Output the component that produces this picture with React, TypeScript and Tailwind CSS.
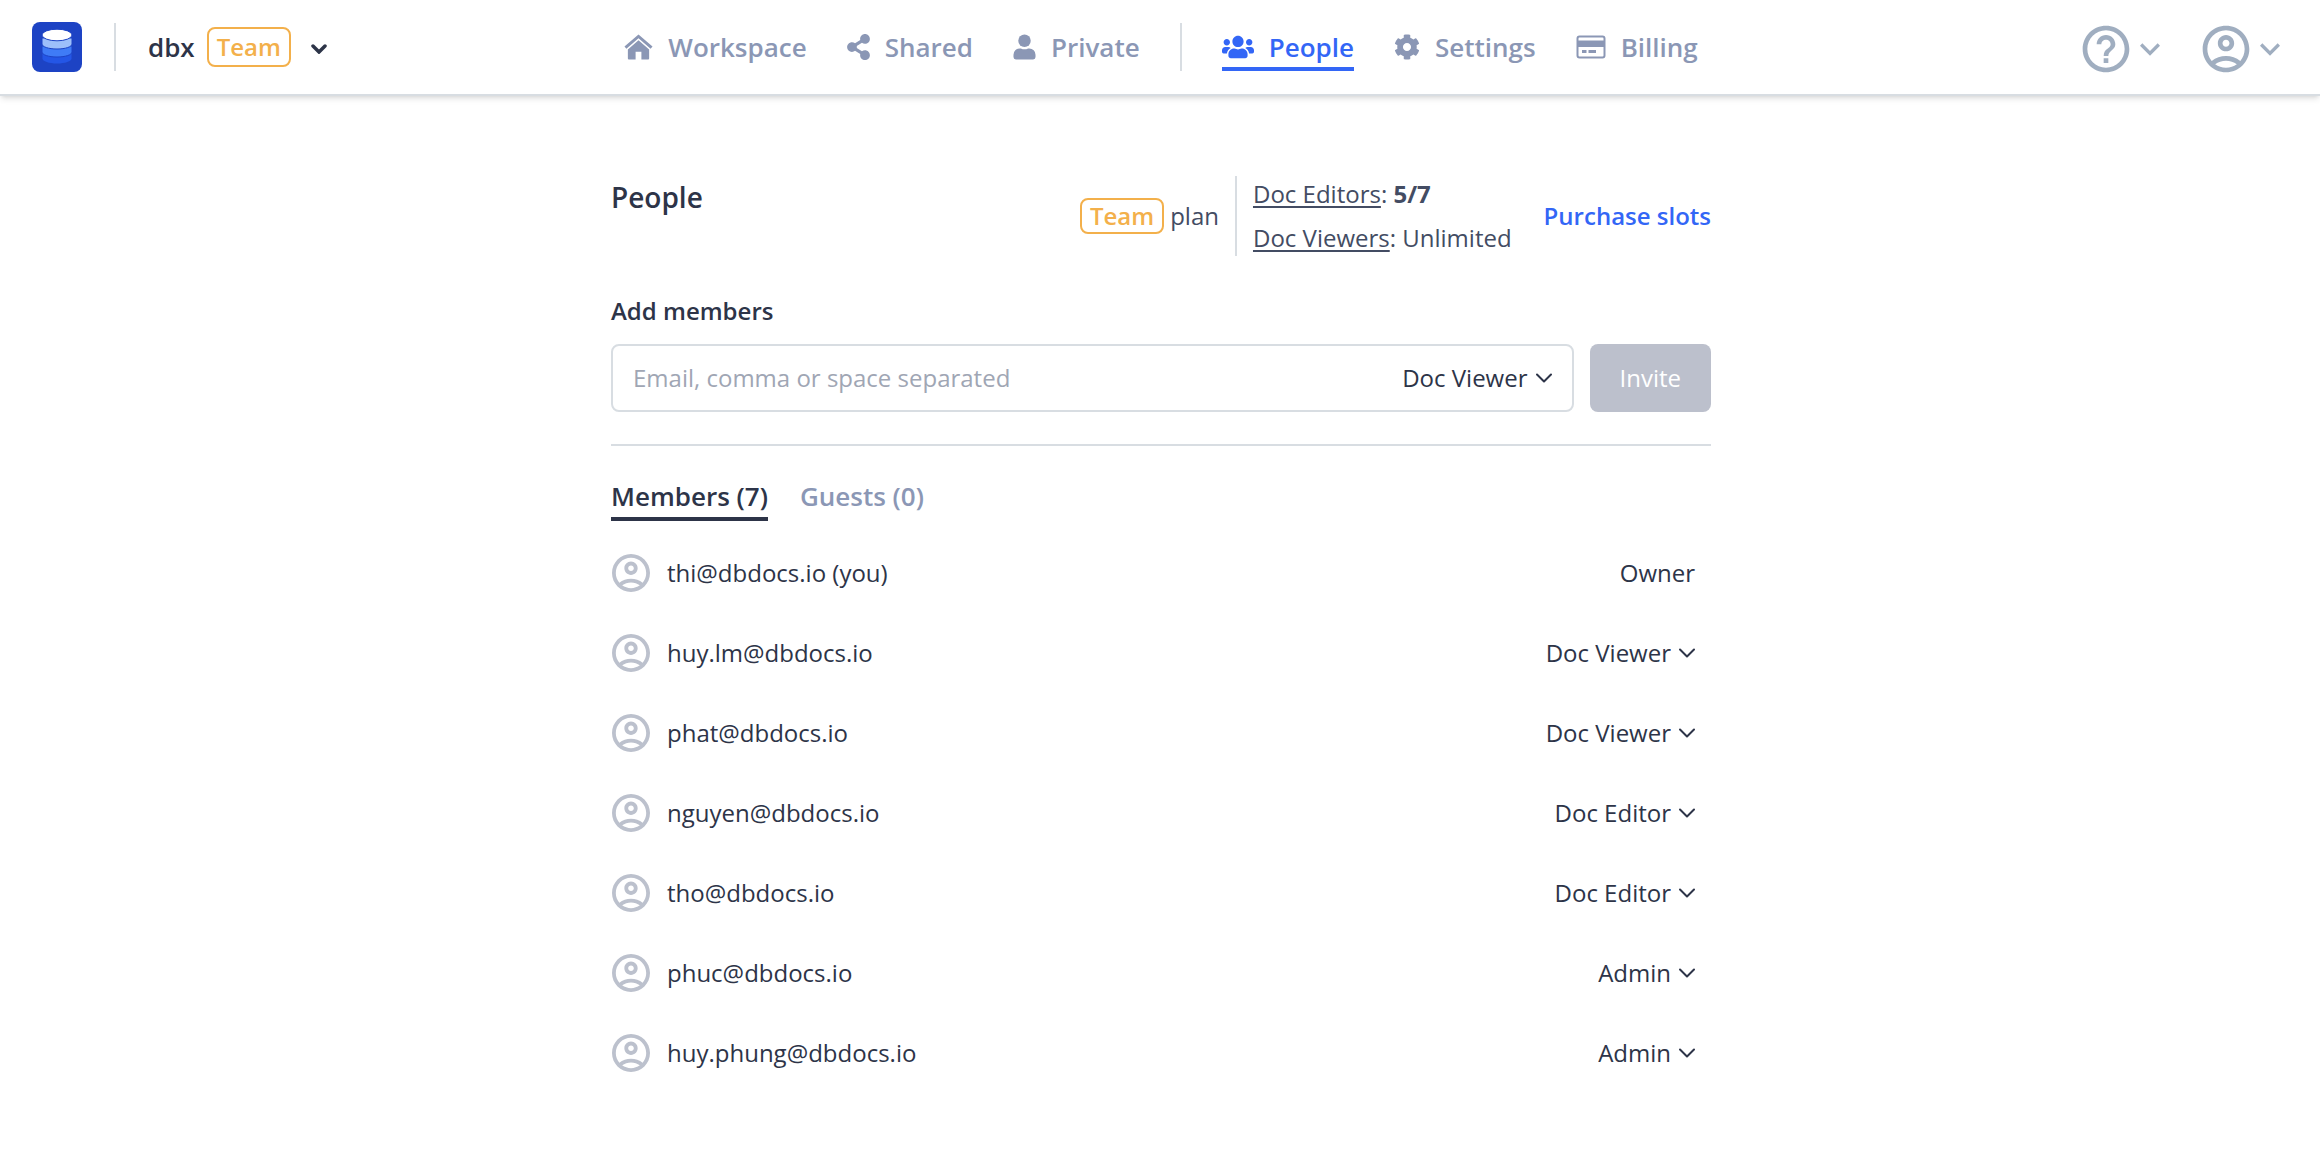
import React from "react";
import { MdExpandMore, MdHelpOutline, MdOutlineAccountCircle } from "react-icons/md";
import { FaShareAlt } from "react-icons/fa";

const members = [
  { email: "thi@dbdocs.io (you)", role: "Owner" },
  { email: "huy.lm@dbdocs.io", role: "Doc Viewer" },
  { email: "phat@dbdocs.io", role: "Doc Viewer" },
  { email: "nguyen@dbdocs.io", role: "Doc Editor" },
  { email: "tho@dbdocs.io", role: "Doc Editor" },
  { email: "phuc@dbdocs.io", role: "Admin" },
  { email: "huy.phung@dbdocs.io", role: "Admin" },
];

const roles = ["Doc Viewer", "Doc Editor", "Admin"];

function Logo() {
  return (
    <svg viewBox="0 0 50 50" className="size-[50px]" aria-hidden="true">
      <rect width="50" height="50" rx="8" fill="#1d43c4" />
      <path d="M10.5 31v5.500c0 2.800 6.500 5 14.500 5s14.500-2.200 14.500-5V31z" fill="#2456e6" />
      <path d="M10 24v6c0 2.800 6.500 5 15 5s15-2.200 15-5v-6z" fill="#3f7bf6" stroke="#1d43c4" />
      <path d="M10 16v6c0 2.800 6.500 5 15 5s15-2.200 15-5v-6z" fill="#9dbffa" stroke="#1d43c4" />
      <ellipse cx="25" cy="13" rx="15" ry="5.800" fill="#fff" stroke="#1d43c4" />
    </svg>
  );
}

function HomeIcon() {
  return (
    <svg viewBox="0 0 30 26" className="w-[29px] h-[26px]" fill="currentColor">
      <path d="M15 0 0.500 12.600l2 2.100L15 3.900l12.500 10.800 2-2.100z" />
      <path d="M15 6 4 15.600V25a1 1 0 0 0 1 1h7v-8h6v8h7a1 1 0 0 0 1-1v-9.400z" />
    </svg>
  );
}

function UserIcon() {
  return (
    <svg viewBox="0 0 24 26" className="w-[23px] h-[26px]" fill="currentColor">
      <circle cx="12" cy="6.500" r="6.500" />
      <path d="M7 14.500h1.200a9 9 0 0 0 7.600 0H17a6.500 6.500 0 0 1 6.500 6.500v2.500A2.500 2.500 0 0 1 21 26H3a2.500 2.500 0 0 1-2.500-2.500V21A6.500 6.500 0 0 1 7 14.500z" />
    </svg>
  );
}

function PeopleIcon() {
  return (
    <svg viewBox="0 0 640 512" className="w-[32px] h-[26px]" fill="currentColor">
      <path d="M96 224c35.300 0 64-28.700 64-64s-28.700-64-64-64-64 28.700-64 64 28.700 64 64 64zm448 0c35.300 0 64-28.700 64-64s-28.700-64-64-64-64 28.700-64 64 28.700 64 64 64zm32 32h-64c-17.600 0-33.500 7.100-45.100 18.600 40.300 22.100 68.900 62 75.100 109.400h66c17.700 0 32-14.300 32-32v-32c0-35.300-28.700-64-64-64zm-256 0c61.900 0 112-50.100 112-112S381.900 32 320 32 208 82.100 208 144s50.100 112 112 112zm76.800 32h-8.300c-20.800 10-43.900 16-68.500 16s-47.600-6-68.500-16h-8.300C179.600 288 128 339.600 128 403.200V432c0 26.500 21.500 48 48 48h288c26.500 0 48-21.500 48-48v-28.800c0-63.600-51.600-115.200-115.200-115.200zm-223.700-13.400C161.500 263.100 145.600 256 128 256H64c-35.300 0-64 28.700-64 64v32c0 17.700 14.300 32 32 32h65.900c6.300-47.400 34.900-87.300 75.200-109.400z" />
    </svg>
  );
}

function GearIcon() {
  return (
    <svg viewBox="0 0 512 512" className="size-[26px]" fill="currentColor">
      <path d="M487.400 315.700l-42.600-24.600c4.300-23.200 4.300-47 0-70.200l42.600-24.600c4.900-2.800 7.100-8.600 5.500-14-11.100-35.600-30-67.800-54.700-94.600-3.800-4.100-10-5.100-14.800-2.300L380.800 110c-17.900-15.400-38.500-27.300-60.800-35.100V25.800c0-5.600-3.900-10.500-9.400-11.700-36.700-8.200-74.300-7.800-109.200 0-5.500 1.200-9.400 6.100-9.400 11.700V75c-22.200 7.900-42.800 19.800-60.800 35.100L88.700 85.500c-4.900-2.800-11-1.900-14.800 2.300-24.700 26.700-43.600 58.900-54.700 94.600-1.700 5.400.6 11.200 5.500 14L67.300 221c-4.300 23.200-4.300 47 0 70.200l-42.600 24.600c-4.900 2.800-7.100 8.600-5.500 14 11.100 35.600 30 67.800 54.700 94.600 3.800 4.100 10 5.100 14.800 2.300l42.600-24.600c17.900 15.400 38.500 27.300 60.800 35.100v49.200c0 5.600 3.900 10.500 9.400 11.700 36.700 8.200 74.300 7.800 109.200 0 5.500-1.200 9.400-6.100 9.400-11.700v-49.200c22.200-7.900 42.800-19.800 60.800-35.100l42.600 24.600c4.900 2.800 11 1.900 14.800-2.300 24.700-26.700 43.600-58.900 54.700-94.600 1.500-5.500-.7-11.300-5.600-14.100zM256 336c-44.100 0-80-35.900-80-80s35.900-80 80-80 80 35.900 80 80-35.900 80-80 80z" />
    </svg>
  );
}

function CardIcon() {
  return (
    <svg viewBox="0 0 30 26" className="w-[30px] h-[26px]" fill="none">
      <rect x="1.500" y="2.500" width="27" height="21" rx="2" stroke="currentColor" strokeWidth="2" />
      <path d="M1 6.500h28V13H1z" fill="currentColor" />
      <path d="M6 17.500h4.500M12.500 17.500h7.500" stroke="currentColor" strokeWidth="3" />
    </svg>
  );
}

function SmallChevron({ className = "" }: { className?: string }) {
  return (
    <svg viewBox="0 0 16 10" className={`w-4 h-[10px] ${className}`} fill="none" aria-hidden="true">
      <path d="M1 1.500l7 7 7-7" stroke="currentColor" strokeWidth="2" strokeLinecap="round" strokeLinejoin="round" />
    </svg>
  );
}

function Avatar() {
  return (
    <svg viewBox="2 2 20 20" className="size-10 p-px text-[#bcc1cd] shrink-0" fill="currentColor" aria-hidden="true">
      <path d="M12 2C6.480 2 2 6.480 2 12s4.480 10 10 10 10-4.480 10-10S17.520 2 12 2zM7.350 18.500C8.660 17.560 10.260 17 12 17s3.340.56 4.650 1.500C15.340 19.440 13.740 20 12 20s-3.340-.56-4.650-1.500zm10.790-1.380C16.450 15.800 14.320 15 12 15s-4.450.8-6.140 2.120C4.700 15.730 4 13.950 4 12c0-4.420 3.580-8 8-8s8 3.580 8 8c0 1.950-.7 3.730-1.860 5.120zM12 6c-1.930 0-3.500 1.570-3.500 3.500S10.070 13 12 13s3.500-1.570 3.500-3.500S13.930 6 12 6zm0 5c-.83 0-1.500-.67-1.500-1.500S11.170 8 12 8s1.500.67 1.500 1.500S12.830 11 12 11z" />
    </svg>
  );
}

function TeamBadge({ className = "" }: { className?: string }) {
  return (
    <span
      className={`flex items-center rounded-lg border-2 border-[#f3b04b] px-2 text-2xl font-semibold text-[#f3b04b] ${className}`}
    >
      Team
    </span>
  );
}

function NavItem({ icon, label, active = false }: { icon: React.ReactNode; label: string; active?: boolean }) {
  return (
    <a
      href="#"
      className={`flex h-12 items-center gap-[15px] border-y-4 border-t-transparent ${
        active ? "border-b-[#3366f6] text-[#3366f6]" : "border-b-transparent text-[#8b97b5]"
      }`}
    >
      {icon}
      {label}
    </a>
  );
}

function RoleSelect({ value, label }: { value: string; label: string }) {
  return (
    <div className="relative flex items-center">
      <select
        aria-label={label}
        defaultValue={value}
        className="field-sizing-content appearance-none bg-transparent pr-6 outline-none"
      >
        {roles.map((r) => (
          <option key={r}>{r}</option>
        ))}
      </select>
      <SmallChevron className="pointer-events-none absolute right-0" />
    </div>
  );
}

export default function App() {
  return (
    <div className="min-h-screen bg-white font-['Open_Sans',sans-serif] text-2xl text-[#2d3448]">
      <header className="grid h-24 grid-cols-[1fr_auto_1fr] items-center border-b-2 border-[#d8dde2] pr-[30px] pl-8 text-[26px] font-semibold shadow-md">
        <div className="flex items-center">
          <Logo />
          <div className="mx-8 h-12 w-0.5 bg-[#d8dde2]" />
          <button className="flex items-center">
            dbx
            <TeamBadge className="ml-3 h-10" />
            <svg viewBox="0 0 16 10" className="ml-5 mt-1 w-4 h-[10px]" fill="none">
              <path d="M2 2l6 6 6-6" stroke="currentColor" strokeWidth="3.500" strokeLinecap="round" />
            </svg>
          </button>
        </div>

        <nav className="flex items-center gap-10">
          <NavItem icon={<HomeIcon />} label="Workspace" />
          <NavItem icon={<FaShareAlt className="w-[23px] h-[26px]" />} label="Shared" />
          <NavItem icon={<UserIcon />} label="Private" />
          <div className="h-12 w-0.5 bg-[#d8dde2]" />
          <NavItem icon={<PeopleIcon />} label="People" active />
          <NavItem icon={<GearIcon />} label="Settings" />
          <NavItem icon={<CardIcon />} label="Billing" />
        </nav>

        <div className="mt-1 flex items-center justify-end gap-7 text-[#a0aec0]">
          <button aria-label="Help" className="flex items-center">
            <MdHelpOutline className="size-14" />
            <MdExpandMore className="-ml-1 size-10" />
          </button>
          <button aria-label="Account" className="flex items-center">
            <MdOutlineAccountCircle className="size-14" />
            <MdExpandMore className="-ml-1 size-10" />
          </button>
        </div>
      </header>

      <main className="mx-auto max-w-[1102px] pt-20 pl-0.5">
        <div className="flex items-start justify-between">
          <h1 className="text-[28px] leading-[42px] font-semibold">People</h1>
          <div className="flex items-center text-[#434c63]">
            <TeamBadge className="h-9" />
            <span className="ml-1.5">plan</span>
            <div className="ml-4 h-20 border-l-2 border-[#d8dde2] pl-4">
              <div className="-mt-1 leading-[44px]">
                <span className="underline decoration-2 underline-offset-[3px]">Doc Editors</span>: <b>5/7</b>
              </div>
              <div className="leading-[44px]">
                <span className="underline decoration-2 underline-offset-[3px]">Doc Viewers</span>: Unlimited
              </div>
            </div>
            <a href="#" className="ml-8 font-semibold text-[#3366f6]">
              Purchase slots
            </a>
          </div>
        </div>

        <form className="mt-[37px] border-b-2 border-[#d8dde2] pb-8">
          <label htmlFor="emails" className="block leading-9 font-semibold">
            Add members
          </label>
          <div className="mt-[15px] flex gap-4">
            <div className="flex h-[68px] flex-1 items-center rounded-lg border-2 border-[#d8dde2] px-5">
              <input
                id="emails"
                type="text"
                placeholder="Email, comma or space separated"
                className="min-w-0 flex-1 outline-none placeholder:text-[#a0a6b4]"
              />
              <RoleSelect value="Doc Viewer" label="Role for new members" />
            </div>
            <button type="button" className="h-[68px] rounded-lg bg-[#bcc0cc] px-[30px] text-white">
              Invite
            </button>
          </div>
        </form>

        <div className="mt-8 flex gap-8 text-[26px] leading-9 font-semibold">
          <button className="border-b-4 border-[#2d3448] pb-[3px]">Members (7)</button>
          <button className="border-b-4 border-transparent pb-[3px] text-[#8b97b5]">Guests (0)</button>
        </div>

        <ul className="mt-3">
          {members.map((m) => (
            <li key={m.email} className="flex h-20 items-center gap-4 pr-4">
              <Avatar />
              <span className="flex-1">{m.email}</span>
              {m.role === "Owner" ? <span>Owner</span> : <RoleSelect value={m.role} label={`Role of ${m.email}`} />}
            </li>
          ))}
        </ul>
      </main>
    </div>
  );
}
